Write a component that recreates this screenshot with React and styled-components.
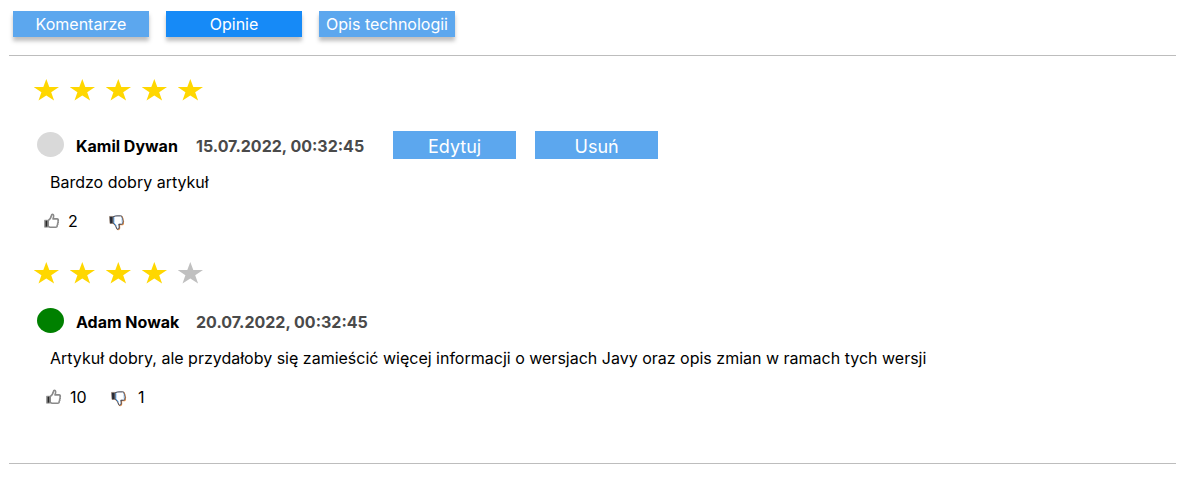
import React from 'react';
import styled, { createGlobalStyle } from 'styled-components';

const GlobalStyle = createGlobalStyle`
  *, *::before, *::after { box-sizing: border-box; }
  body {
    margin: 0;
    background: #fff;
    color: #000;
    font-family: Inter, "Liberation Sans", sans-serif;
    font-size: 16px;
    line-height: 20px;
  }
  button { font-family: inherit; cursor: pointer; }
`;

const Page = styled.main`
  padding: 11px 4px 18px 9px;
`;

const Tabs = styled.nav`
  display: flex;
  flex-wrap: wrap;
  gap: 17px;
  padding: 0 4px 18px;
`;

const Tab = styled.button`
  width: 136px;
  height: 26px;
  padding: 0;
  border: 0;
  background: ${({ $active }) => ($active ? '#168af7' : '#5ca7ee')};
  color: #fff;
  font-size: 16px;
  font-weight: 400;
  line-height: 26px;
  white-space: nowrap;
  box-shadow: 0 4px 4px rgba(0, 0, 0, 0.25);
`;

const Reviews = styled.section`
  display: flex;
  flex-direction: column;
  gap: 31px;
  padding: 23px 24px 56px;
  border-top: 1px solid #bdbdbd;
  border-bottom: 1px solid #bdbdbd;
`;

const Review = styled.article`
  display: flex;
  flex-direction: column;
  font-optical-sizing: none;
`;

const Stars = styled.div`
  display: flex;
  gap: 9px;
  padding-left: 1px;
  margin-bottom: ${({ $roomy }) => ($roomy ? '30px' : '23px')};
`;

const StarShape = styled.svg`
  display: block;
  width: 27px;
  height: 22px;
  fill: ${({ $filled }) => ($filled ? '#ffd700' : '#c0c0c0')};
`;

const Header = styled.header`
  display: flex;
  flex-wrap: wrap;
  align-items: center;
  min-height: 28px;
  padding-left: 4px;
`;

const Avatar = styled.span`
  align-self: flex-start;
  width: 27px;
  height: 25px;
  margin: 1px 12px 0 0;
  border-radius: 50%;
  background: ${({ $color }) => $color};
`;

const Author = styled.strong`
  min-width: 120px;
  padding-top: 2px;
  font-weight: 700;
`;

const Posted = styled.time`
  padding-top: 2px;
  color: #4a4a4a;
  font-weight: 700;
`;

const Actions = styled.div`
  display: flex;
  gap: 19px;
  margin-left: 29px;
`;

const Action = styled.button`
  width: 123px;
  height: 28px;
  padding: 2px 0 0;
  border: 0;
  background: #5ca7ee;
  color: #fff;
  font-size: 18px;
  font-weight: 400;
  line-height: 28px;
`;

const Body = styled.p`
  margin: 13px 0 19px;
  padding-left: 17px;
`;

const Votes = styled.div`
  display: flex;
  padding-left: ${({ $indent }) => $indent}px;
`;

const Vote = styled.button`
  display: flex;
  align-items: center;
  gap: ${({ $down }) => ($down ? '11px' : '8px')};
  min-width: 65px;
  height: 20px;
  padding: 0;
  border: 0;
  background: none;
  color: #000;
  font-size: 16px;
  line-height: 20px;
`;

const Thumb = styled.svg`
  display: block;
  flex: none;
  width: 16px;
  height: 16px;
  margin-top: ${({ $down }) => ($down ? '3px' : '0')};
`;

function Star({ filled }) {
  return (
    <StarShape viewBox="0 0 27 22" $filled={filled} aria-hidden="true">
      <path d="M12.3 0 15.3 8.1H25L17.2 13.2 20.1 21.4 12.3 16.4 4.5 21.4 7.4 13.2-.4 8.1H9.3Z" />
    </StarShape>
  );
}

function ThumbUp() {
  return (
    <Thumb viewBox="0 0 16 16" fill="none" aria-hidden="true">
      <path d="M.5 7.2H3.6V14.2H.5Z" fill="#666" stroke="#999" strokeWidth=".8" />
      <path d="M2.8 7.8V13.6" stroke="#222" strokeWidth="1.4" />
      <path
        d="M4.2 7.4C6.2 6.4 7 4.6 7.4 2.4 7.6 1.1 9.4 1 9.6 2.4 9.8 3.7 9.4 4.9 9 5.9H12.9C14.4 5.9 14.7 7.4 13.9 8 14.6 8.7 14.2 9.8 13.6 10.2 14 11 13.8 11.9 13.1 12.3 13.5 13.6 12.7 14.3 11.6 14.3H7.2C5.8 14.3 5 13.8 4.2 13.5Z"
        fill="#fff"
        stroke="#8a8a8a"
        strokeWidth="1.6"
        strokeLinejoin="round"
      />
    </Thumb>
  );
}

function ThumbDown() {
  const hand =
    'M4.2 1.7C5.8 1 6.8.9 8 .9H11.6C12.8.9 13.4 1.8 13 2.8 13.7 3.3 13.9 4.1 13.5 4.9 14.2 5.6 14.2 6.4 13.7 7 14.4 8.3 13.6 9.2 12.4 9.2H9.8C10.1 10.6 10.3 11.8 10.1 13 9.8 14.7 7.9 14.5 7.5 13.2 6.9 10.8 5.9 9.2 4.2 8.2Z';
  return (
    <Thumb viewBox="0 0 16 16" fill="none" $down aria-hidden="true">
      <path d={hand} transform="translate(.5 .5)" stroke="#f0964a" strokeWidth="1.2" />
      <path d={hand} fill="#fff" stroke="#1a2c4c" strokeWidth=".9" />
      <path d="M4.9 2.2V7.8L7.4 11" stroke="#4fa3f0" strokeWidth=".9" />
      <path d="M12.7 2.5V7.6" stroke="#9dccf8" strokeWidth=".6" />
      <path d="M.5 1.4H3.8V8.5H1Z" fill="#252a38" stroke="#8a6a50" strokeWidth=".5" />
    </Thumb>
  );
}

const tabs = ['Komentarze', 'Opinie', 'Opis technologii'];

const reviews = [
  {
    author: 'Kamil Dywan',
    color: '#d9d9d9',
    posted: '15.07.2022, 00:32:45',
    rating: 5,
    text: 'Bardzo dobry artykuł',
    up: 2,
    own: true,
    indent: 11,
  },
  {
    author: 'Adam Nowak',
    color: '#008000',
    posted: '20.07.2022, 00:32:45',
    rating: 4,
    text: 'Artykuł dobry, ale przydałoby się zamieścić więcej informacji o wersjach Javy oraz opis zmian w ramach tych wersji',
    up: 10,
    down: 1,
    indent: 13,
  },
];

export default function App() {
  return (
    <>
      <GlobalStyle />
      <Page>
        <Tabs>
          {tabs.map((label) => (
            <Tab key={label} type="button" $active={label === 'Opinie'}>
              {label}
            </Tab>
          ))}
        </Tabs>
        <Reviews>
          {reviews.map((r) => (
            <Review key={r.author}>
              <Stars role="img" aria-label={`${r.rating} / 5`} $roomy={r.own}>
                {[1, 2, 3, 4, 5].map((n) => (
                  <Star key={n} filled={n <= r.rating} />
                ))}
              </Stars>
              <Header>
                <Avatar $color={r.color} />
                <Author>{r.author}</Author>
                <Posted>{r.posted}</Posted>
                {r.own && (
                  <Actions>
                    <Action type="button">Edytuj</Action>
                    <Action type="button">Usuń</Action>
                  </Actions>
                )}
              </Header>
              <Body>{r.text}</Body>
              <Votes $indent={r.indent}>
                <Vote type="button" aria-label="Lubię to">
                  <ThumbUp />
                  {r.up}
                </Vote>
                <Vote type="button" aria-label="Nie lubię" $down>
                  <ThumbDown />
                  {r.down}
                </Vote>
              </Votes>
            </Review>
          ))}
        </Reviews>
      </Page>
    </>
  );
}
